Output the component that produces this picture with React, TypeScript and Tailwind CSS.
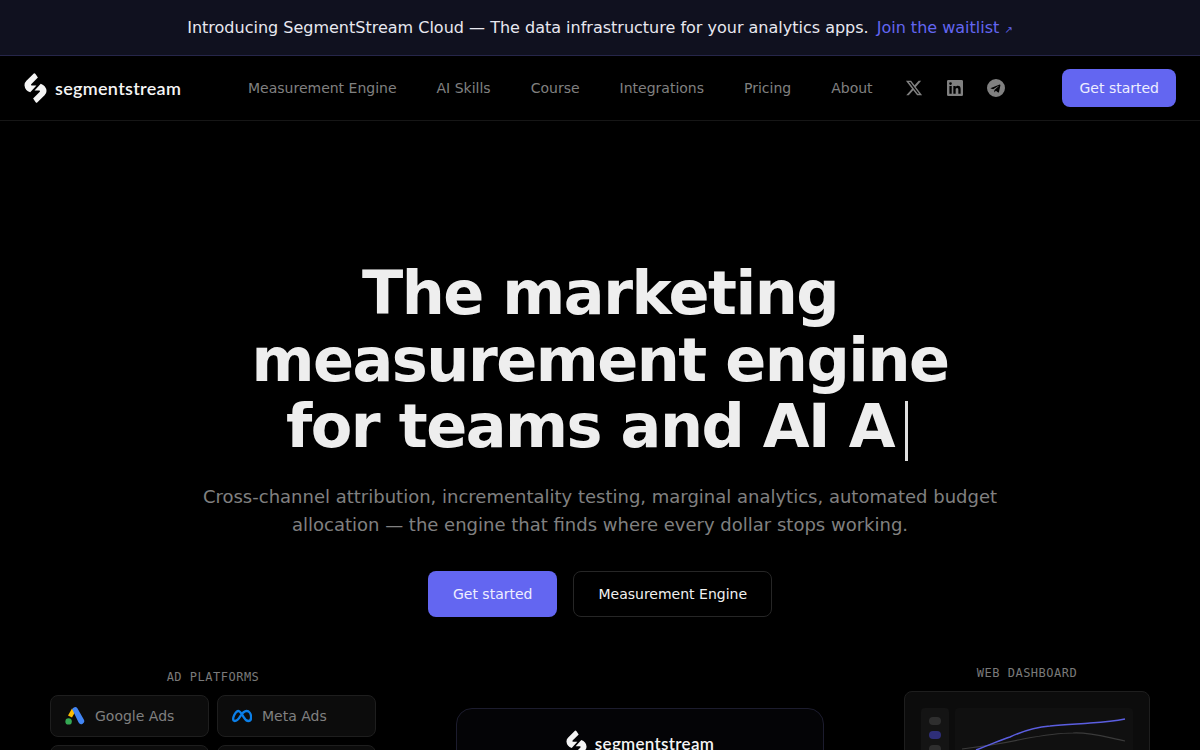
const NAV = ["Measurement Engine", "AI Skills", "Course", "Integrations", "Pricing", "About"];
const SANS = "font-['DejaVu_Sans',sans-serif]";
const LABEL = "text-center font-['DejaVu_Sans_Mono',monospace] text-xs leading-4 tracking-[0.5px] text-[#7a7a7a]";

function LogoMark({ className }: { className: string }) {
  const half = "M14.5 4.5 Q15.5 4.5 16 5.5 L18.5 9 L11.5 16 Q10.5 17.5 12.5 17.5 L17 17.5 L10.5 24.5 Q5 22.5 4.5 17 Q4.5 14.5 6.5 12.5 Z";
  return (
    <svg viewBox="4 3.5 24 33" className={className} fill="#f5f5f5">
      <path d={half} />
      <path d={half} transform="rotate(180 16 20)" />
    </svg>
  );
}

function Wordmark({ className }: { className: string }) {
  return <span className={`font-['Lato',sans-serif] font-semibold tracking-[0.3px] text-[#f5f5f5] ${className}`}>segmentstream</span>;
}

function GoogleAdsIcon() {
  return (
    <svg viewBox="0 0 20 18" className="h-[18px] w-5">
      <path d="M7 1.5 L3 8.5 L7 10.5 L10 5 Z" fill="#fbbc04" />
      <path d="M7.2 2.2 a3 3 0 0 1 5.2 -1 L18.8 12.6 a3 3 0 0 1 -5.2 3 Z" fill="#4285f4" />
      <circle cx="3.6" cy="14.4" r="3.2" fill="#34a853" />
    </svg>
  );
}

function MetaIcon() {
  return (
    <svg viewBox="0 0 22 14" className="h-[14px] w-5" fill="none" stroke="#0b7fe8" strokeWidth="2.5">
      <path d="M3 12.5 C0.5 12.5 1 9 2.5 6 C4 3 5.5 1.5 7 1.5 C9 1.5 11 5 13 8.5 C14.5 11 16 12.5 18 12.5 C20 12.5 21 11 21 8.5 C21 4.5 19 1.5 16 1.5 C13 1.5 10.5 5 9 7.5 C7 11 5.5 12.5 3 12.5 Z" />
    </svg>
  );
}

function Platform({ name, icon }: { name: string; icon?: React.ReactNode }) {
  return (
    <div className="flex h-[42px] items-center gap-2.5 rounded-lg border border-[#1e1e1e] bg-[#0c0c0c] px-3.5 text-sm text-[#808080]">
      {icon}
      {name}
    </div>
  );
}

export default function App() {
  return (
    <div className={`h-screen overflow-hidden bg-black ${SANS}`}>
      <div className="flex h-14 items-center justify-center gap-2 border-b border-[#26264a] bg-[#10111f] text-base text-[#e8e8f0]">
        <span>Introducing SegmentStream Cloud — The data infrastructure for your analytics apps.</span>
        <a className="text-[#6366f1]">
          Join the waitlist <span className="text-[10px]">↗</span>
        </a>
      </div>

      <nav className="flex h-[65px] items-center border-b border-[#161616] pl-6 pr-6">
        <div className="flex w-[224px] items-center gap-2">
          <LogoMark className="h-8 w-[23px]" />
          <Wordmark className="text-[18px]" />
        </div>
        <div className="flex gap-10 text-sm text-[#808080]">
          {NAV.map((item) => (
            <a key={item}>{item}</a>
          ))}
        </div>
        <div className="ml-8 flex items-center gap-6 text-[#808080]">
          <svg viewBox="0 0 24 24" className="h-[18px] w-[18px]" fill="currentColor">
            <path d="M18.244 2.25h3.308l-7.227 8.26 8.502 11.24H16.17l-5.214-6.817L4.99 21.75H1.68l7.73-8.835L1.254 2.25H8.08l4.713 6.231zm-1.161 17.52h1.833L7.084 4.126H5.117z" />
          </svg>
          <svg viewBox="0 0 24 24" className="h-4 w-4" fill="currentColor">
            <path d="M22 0H2a2 2 0 0 0-2 2v20a2 2 0 0 0 2 2h20a2 2 0 0 0 2-2V2a2 2 0 0 0-2-2zM7.1 20.5H3.6V9h3.5zM5.3 7.4a2 2 0 1 1 0-4.1 2 2 0 0 1 0 4.1zm15.2 13.1H17v-5.6c0-1.3 0-3-1.9-3s-2.1 1.4-2.1 2.9v5.7H9.5V9h3.4v1.6c.5-.9 1.6-1.9 3.4-1.9 3.6 0 4.2 2.4 4.2 5.5z" />
          </svg>
          <svg viewBox="0 0 24 24" className="h-[18px] w-[18px]" fill="currentColor">
            <path d="M12 0a12 12 0 1 0 0 24 12 12 0 0 0 0-24zm5.9 8.2-2 9.3c-.1.7-.5.8-1.1.5l-3-2.2-1.5 1.4c-.2.2-.3.3-.6.3l.2-3 5.6-5c.2-.2 0-.3-.4-.1l-6.9 4.3-3-.9c-.6-.2-.7-.6.1-.9l11.6-4.5c.5-.2 1 .1.9.8z" />
          </svg>
        </div>
        <button className="ml-auto h-[38px] rounded-lg bg-[#6366f1] px-[17px] text-sm text-[#eeeeff]">Get started</button>
      </nav>

      <section className="flex flex-col items-center pt-[139px] text-center">
        <h1 className="text-[60.5px] font-bold leading-[66.5px] tracking-[-1.51px] text-[#eeeeee]">
          The marketing
          <br />
          measurement engine
          <br />
          for teams and AI A
          <span className="ml-[11.5px] mr-[5.5px] inline-block h-[60px] w-[3px] bg-[#e0e0e0] align-[-14px]" />
        </h1>
        <p className="mt-[21.5px] w-[820px] text-lg leading-[28px] text-[#808080]">
          Cross-channel attribution, incrementality testing, marginal analytics, automated budget allocation — the engine that finds where every dollar stops working.
        </p>
        <div className="mt-[32px] flex gap-4 text-sm">
          <button className="h-[46px] rounded-lg bg-[#6366f1] px-[25px] text-[#eeeeff]">Get started</button>
          <button className="h-[46px] rounded-lg border border-[#262626] px-6 text-[#f0f0f0]">Measurement Engine</button>
        </div>
      </section>

      <section className="mt-[52px] flex justify-between px-[50px]">
        <div className="w-[326px]">
          <div className={LABEL}>AD PLATFORMS</div>
          <div className="mt-[10px] grid grid-cols-2 gap-2">
            <Platform name="Google Ads" icon={<GoogleAdsIcon />} />
            <Platform name="Meta Ads" icon={<MetaIcon />} />
            <Platform name="" />
            <Platform name="" />
          </div>
        </div>
        <div className="mt-[39px] flex h-[200px] w-[368px] flex-col items-center rounded-2xl border border-[#1c1c2e] bg-[#040406] pt-5">
          <div className="flex items-center gap-2">
            <LogoMark className="h-[30px] w-[21px]" />
            <Wordmark className="text-[17px]" />
          </div>
        </div>
        <div className="-mt-[4px] w-[246px]">
          <div className={LABEL}>WEB DASHBOARD</div>
          <div className="mt-[10px] h-[200px] rounded-lg border border-[#1e1e1e] bg-[#0c0c0c] p-4">
            <div className="flex h-full gap-[6px]">
              <div className="flex h-full w-[28px] flex-col items-center gap-[6px] rounded bg-[#141414] pt-[9px]">
                <div className="h-2 w-3 rounded-sm bg-[#2e2e2e]" />
                <div className="h-2 w-3 rounded-sm bg-[#2e2e78]" />
                <div className="h-2 w-3 rounded-sm bg-[#2e2e2e]" />
              </div>
              <div className="h-full flex-1 rounded bg-[#101010]">
                <svg viewBox="0 0 178 60" className="w-full" fill="none">
                  <path d="M7 41 C30 38 50 35 68 31 C90 27 105 25 118 25 C135 24 150 29 170 33" stroke="#3a3a3a" strokeWidth="1.2" />
                  <path d="M21 42 C35 37 45 32 55 29 C70 22 82 19 95 18 C110 16 125 16 135 15 C150 14 160 13 170 11" stroke="#5b5ee0" strokeWidth="1.5" />
                </svg>
              </div>
            </div>
          </div>
        </div>
      </section>
    </div>
  );
}
